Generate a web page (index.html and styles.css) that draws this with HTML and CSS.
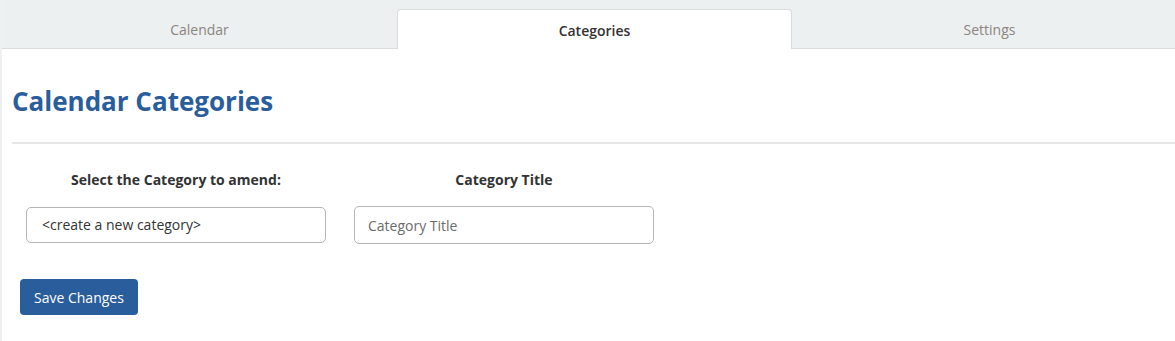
FILE: index.html
```html
<!DOCTYPE html>
<html>
<head>
  <title>Calendar Categories</title>
  <meta name="viewport" content="width=device-width, initial-scale=1">
  <link rel="stylesheet" href="styles.css">
</head>
<body>

  <!-- Tabs -->
  <div class="tabs">
    <a class="tab">Calendar</a>
    <a class="tab active">Categories</a>
    <a class="tab">Settings</a>
  </div>

  <div class="content">
    <h1>Calendar Categories</h1>
    <hr>

    <div class="form-row">
      <div class="field">
        <label>Select the Category to amend:</label>
        <div class="select">&lt;create a new category&gt;</div>
      </div>
      <div class="field">
        <label>Category Title</label>
        <input type="text" placeholder="Category Title">
      </div>
    </div>

    <button class="save">Save Changes</button>
  </div>

</body>
</html>
```

FILE: styles.css
```css
body {
  font-family: 'Open Sans', sans-serif;
  font-size: 14px;
  margin: 0;
  background-color: #fff;
  color: #333;
  overflow: hidden;
  border-left: 2px solid #eef0f1;
  min-height: 100vh;
  box-sizing: border-box;
}

.tabs {
  display: flex;
  height: 48px;
  background-color: #edf0f1;
  border-bottom: 1px solid #d9dcdd;
  margin-left: -2px;
  padding-left: 2px;
  width: 1200px;
}

.tab {
  width: 395px;
  flex: none;
  box-sizing: border-box;
  display: flex;
  align-items: center;
  justify-content: center;
  padding-top: 10px;
  color: #8b8480;
  cursor: pointer;
}

.tab.active {
  margin-top: 9px;
  padding-top: 1px;
  height: 40px;
  background-color: #fff;
  border: 1px solid #d9dcdd;
  border-bottom: none;
  border-radius: 4px 4px 0 0;
  color: #333;
  font-weight: 600;
}

.content {
  padding: 0 0 0 10px;
}

h1 {
  margin: 34px 0 0 0;
  font-size: 26px;
  font-weight: 700;
  line-height: 36px;
  color: #2a5d9c;
}

hr {
  margin: 23px 0 0 0;
  border: none;
  height: 2px;
  background-color: #e6e6e6;
}

.form-row {
  display: flex;
  gap: 28px;
  padding-left: 14px;
  margin-top: 26px;
}

.field {
  width: 300px;
  display: flex;
  flex-direction: column;
  align-items: center;
}

.field label {
  font-weight: 700;
  line-height: 20px;
  margin-bottom: 16px;
}

.select, .field input {
  width: 100%;
  box-sizing: border-box;
  border: 1px solid #b5b5b5;
  border-radius: 5px;
  font-family: inherit;
  font-size: 14px;
  color: #333;
  background: #fff;
}

.select {
  height: 36px;
  line-height: 34px;
  padding: 0 15px;
  margin-top: 1px;
}

.field input {
  height: 38px;
  padding: 0 13px;
  outline: none;
}

.field input::placeholder {
  color: #6b6b6b;
}

.save {
  margin: 35px 0 0 8px;
  height: 36px;
  padding: 0 14px;
  font-family: inherit;
  font-size: 14px;
  background-color: #2a5d9c;
  color: #fff;
  border: none;
  border-radius: 4px;
  cursor: pointer;
}
```
